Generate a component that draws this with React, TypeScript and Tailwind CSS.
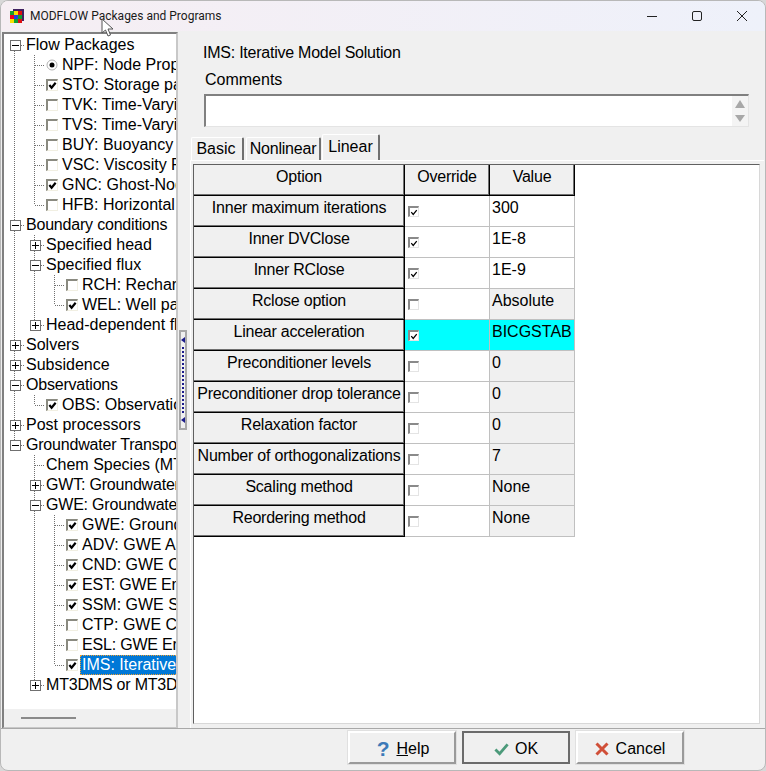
import React from "react";

type Kind = "plus" | "minus" | "check" | "empty" | "radio" | "none";
type Row = { t: string; l: number; k: Kind; sel?: boolean; n?: boolean };

const rows: Row[] = [
  { t: "Flow Packages", l: 0, k: "minus" },
  { t: "NPF: Node Property Flow", l: 1, k: "radio" },
  { t: "STO: Storage package", l: 1, k: "check" },
  { t: "TVK: Time-Varying K", l: 1, k: "empty" },
  { t: "TVS: Time-Varying S", l: 1, k: "empty" },
  { t: "BUY: Buoyancy Package", l: 1, k: "empty" },
  { t: "VSC: Viscosity Package", l: 1, k: "empty" },
  { t: "GNC: Ghost-Node Correction", l: 1, k: "check" },
  { t: "HFB: Horizontal Flow Barrier", l: 1, k: "empty" },
  { t: "Boundary conditions", l: 0, k: "minus", n: true },
  { t: "Specified head", l: 1, k: "plus" },
  { t: "Specified flux", l: 1, k: "minus" },
  { t: "RCH: Recharge package", l: 2, k: "empty" },
  { t: "WEL: Well package", l: 2, k: "check" },
  { t: "Head-dependent flux", l: 1, k: "plus" },
  { t: "Solvers", l: 0, k: "plus" },
  { t: "Subsidence", l: 0, k: "plus" },
  { t: "Observations", l: 0, k: "minus", n: true },
  { t: "OBS: Observations", l: 1, k: "check" },
  { t: "Post processors", l: 0, k: "plus" },
  { t: "Groundwater Transport", l: 0, k: "minus", n: true },
  { t: "Chem Species (MT3D)", l: 1, k: "none" },
  { t: "GWT: Groundwater Transport", l: 1, k: "plus", n: true },
  { t: "GWE: Groundwater Energy", l: 1, k: "minus", n: true },
  { t: "GWE: Groundwater Energy", l: 2, k: "check" },
  { t: "ADV: GWE Advection", l: 2, k: "check" },
  { t: "CND: GWE Conduction", l: 2, k: "check" },
  { t: "EST: GWE Energy Storage", l: 2, k: "check", n: true },
  { t: "SSM: GWE Source and Sink", l: 2, k: "check" },
  { t: "CTP: GWE Constant Temp", l: 2, k: "empty" },
  { t: "ESL: GWE Energy Source", l: 2, k: "empty", n: true },
  { t: "IMS: Iterative Model Solution", l: 2, k: "check", sel: true },
  { t: "MT3DMS or MT3D-USGS", l: 1, k: "plus", n: true },
];

// Tree connector lines, relative to the tree list origin.
const cy = (i: number) => i * 20 + 10;
const gx = [11, 31, 51];
const verticals: [number, number, number][] = [
  [0, 0, 20],
  [1, 1, 8],
  [1, 10, 14],
  [2, 12, 13],
  [1, 18, 18],
  [1, 21, 32],
  [2, 24, 31],
];

function Connectors() {
  return (
    <svg className="absolute left-0 top-0" width="172" height="680" shapeRendering="crispEdges">
      <g stroke="#707070" strokeWidth="1" strokeDasharray="1 1" fill="none">
        {verticals.map(([lv, a, b], i) => (
          <line key={i} x1={gx[lv] - 0.5} x2={gx[lv] - 0.5} y1={a === 0 ? cy(a) : cy(a) - 10} y2={cy(b)} />
        ))}
        {rows.map((r, i) => (
          <line key={i} x1={gx[r.l]} x2={gx[r.l] + 10} y1={cy(i) + 0.5} y2={cy(i) + 0.5} />
        ))}
      </g>
    </svg>
  );
}

function Expander({ open }: { open: boolean }) {
  return (
    <svg width="11" height="11" viewBox="0 0 11 11" className="block" shapeRendering="crispEdges">
      <rect x="0.5" y="0.5" width="10" height="10" fill="#fff" stroke="#707070" />
      <path d={open ? "M2 5.5H9" : "M2 5.5H9M5.5 2V9"} stroke="#000" fill="none" />
    </svg>
  );
}

function Check({ on, size = 12 }: { on: boolean; size?: number }) {
  const big = size === 12;
  return (
    <span
      className={
        big
          ? "flex h-[12px] w-[12px] items-center justify-center border-2 border-b-[#f1efe2] border-l-[#8a8a80] border-r-[#f1efe2] border-t-[#8a8a80] border-b-[1px] border-r-[1px] bg-white"
          : "flex h-[11px] w-[11px] items-center justify-center border-2 border-b-[#e4e4e4] border-l-[#8a8a8a] border-r-[#e4e4e4] border-t-[#8a8a8a] border-b-[1px] border-r-[1px] bg-white"
      }
    >
      {on && (
        <svg width={big ? 10 : 8} height={big ? 9 : 7} viewBox="0 0 10 9">
          <path d="M1.5 4 L4 7 L8.5 1.5" stroke="#000" strokeWidth={big ? 2.4 : 1.6} fill="none" />
        </svg>
      )}
    </span>
  );
}

function Radio() {
  return (
    <svg width="12" height="12" viewBox="0 0 12 12" className="block">
      <circle cx="6" cy="6" r="5" fill="#fff" stroke="#b0b0b0" />
      <circle cx="6" cy="6" r="2.5" fill="#000" />
    </svg>
  );
}

function TreeRow({ r }: { r: Row }) {
  const isExp = r.k === "plus" || r.k === "minus";
  const indent = ["ml-[6px]", "ml-[26px]", "ml-[46px]"];
  const boxIndent = ["", "ml-[42px]", "ml-[62px]"];
  return (
    <div className="relative flex h-5 items-center whitespace-nowrap">
      {isExp && (
        <span className={`${indent[r.l]} mr-[5px] shrink-0`}>
          <Expander open={r.k === "minus"} />
        </span>
      )}
      {(r.k === "check" || r.k === "empty") && (
        <span className={`${boxIndent[r.l]} mr-[4px] shrink-0`}>
          <Check on={r.k === "check"} />
        </span>
      )}
      {r.k === "radio" && (
        <span className={`${boxIndent[r.l]} mr-[4px] shrink-0`}>
          <Radio />
        </span>
      )}
      {r.k === "none" && <span className="ml-[42px] shrink-0" />}
      <span
        className={
          r.sel
            ? "-ml-[2px] flex h-5 flex-1 items-center border border-dotted border-[#f0a030] bg-[#0078d7] pl-[1px] text-white"
            : r.n
              ? "tracking-[-0.2px] text-black"
              : "text-black"
        }
      >
        {r.t}
      </span>
    </div>
  );
}

const gridRows: { o: string; v: string; on: boolean; white?: boolean; cyan?: boolean }[] = [
  { o: "Inner maximum iterations", v: "300", on: true, white: true },
  { o: "Inner DVClose", v: "1E-8", on: true, white: true },
  { o: "Inner RClose", v: "1E-9", on: true, white: true },
  { o: "Rclose option", v: "Absolute", on: false },
  { o: "Linear acceleration", v: "BICGSTAB", on: true, cyan: true },
  { o: "Preconditioner levels", v: "0", on: false },
  { o: "Preconditioner drop tolerance", v: "0", on: false },
  { o: "Relaxation factor", v: "0", on: false },
  { o: "Number of orthogonalizations", v: "7", on: false },
  { o: "Scaling method", v: "None", on: false },
  { o: "Reordering method", v: "None", on: false },
];

const fixedCell =
  "flex h-[31px] justify-center overflow-hidden whitespace-nowrap border-b border-r border-b-black border-r-black bg-[#f0f0f0] pt-[2px] tracking-[-0.22px] shadow-[inset_-1px_-1px_0_#707070]";

function Btn({ children, dark }: { children: React.ReactNode; dark?: boolean }) {
  return (
    <button
      className={
        dark
          ? "flex h-[33px] w-[108px] items-center justify-center gap-[6px] border-2 border-[#6b6b6b] bg-[#f0f0f0] pt-[3px]"
          : "flex h-[33px] w-[108px] items-center justify-center gap-[6px] border-2 border-b-[#9a9a9a] border-l-white border-r-[#9a9a9a] border-t-white bg-[#f0f0f0] pt-[3px] shadow-[0_0_0_1px_#e0e0e0]"
      }
    >
      {children}
    </button>
  );
}

export default function App() {
  return (
    <div
      className="relative h-[771px] w-[766px] overflow-hidden bg-[#d8d8d8] text-[16px] leading-[20px] text-black"
      style={{ fontFamily: '"Liberation Sans", Arial, sans-serif' }}
    >
      <div className="flex h-full flex-col overflow-hidden rounded-[8px] border border-[#b8b8b8] bg-[#f0f0f0]">
        {/* Title bar */}
        <div className="flex h-[30px] shrink-0 items-center bg-gradient-to-r from-[#f6eef3] to-[#eef1fa] pl-[9px]">
          <svg width="15" height="14" viewBox="0 0 15 14" className="shrink-0" shapeRendering="crispEdges">
            <rect x="3" y="0" width="11" height="2" fill="#402060" />
            <rect x="0" y="2" width="4" height="4" fill="#1a9a30" />
            <rect x="4" y="2" width="4" height="4" fill="#f8e000" />
            <rect x="8" y="2" width="4" height="4" fill="#e01010" />
            <rect x="0" y="6" width="4" height="4" fill="#f00020" />
            <rect x="4" y="6" width="4" height="4" fill="#2040e0" />
            <rect x="8" y="6" width="4" height="4" fill="#10a030" />
            <rect x="0" y="10" width="4" height="4" fill="#f8e000" />
            <rect x="4" y="10" width="4" height="4" fill="#10a030" />
            <rect x="8" y="10" width="4" height="4" fill="#e01010" />
            <rect x="12" y="2" width="2" height="10" fill="#402060" />
          </svg>
          <span
            className="ml-[5px] text-[12px] text-[#1a1a1a]"
            style={{ fontFamily: 'Roboto, "Noto Sans", sans-serif' }}
          >
            MODFLOW Packages and Programs
          </span>
          <div className="ml-auto flex items-center pr-[17px]">
            <svg width="12" height="12" viewBox="0 0 12 12" className="mr-[33px]">
              <path d="M1 6.5H11" stroke="#222" strokeWidth="1" fill="none" />
            </svg>
            <svg width="12" height="12" viewBox="0 0 12 12" className="mr-[33px]">
              <rect x="1.5" y="1.5" width="9" height="9" rx="1.5" stroke="#222" strokeWidth="1" fill="none" />
            </svg>
            <svg width="12" height="12" viewBox="0 0 12 12">
              <path d="M1 1L11 11M11 1L1 11" stroke="#222" strokeWidth="1" fill="none" />
            </svg>
          </div>
        </div>

        {/* Body */}
        <div className="flex min-h-0 flex-1">
          {/* Tree */}
          <div className="ml-[1px] mt-[1px] flex h-[697px] w-[176px] shrink-0 flex-col border-2 border-b-[#c8c8c8] border-l-[#808080] border-r-[#c8c8c8] border-t-[#808080] bg-white">
            <div className="relative min-h-0 flex-1 overflow-hidden pt-[1px]">
              <div className="relative w-[172px] overflow-hidden">
                <Connectors />
                {rows.map((r, i) => (
                  <TreeRow key={i} r={r} />
                ))}
              </div>
            </div>
            <div className="flex h-[18px] shrink-0 items-center bg-[#f0f0f0] pl-[17px]">
              <div className="h-[2px] w-[55px] bg-[#8a8a8a]" />
            </div>
          </div>

          {/* Splitter */}
          <div className="flex w-[12px] shrink-0 items-center pl-[1px]">
            <div className="flex h-[100px] w-[8px] flex-col items-center justify-between border-2 border-[#a8a8a8] py-[5px]">
              <span className="h-0 w-0 border-y-[3px] border-r-[4px] border-y-transparent border-r-[#1a1a8a]" />
              <span className="my-[4px] flex-1 border-l-2 border-dotted border-[#1a1a8a]" />
              <span className="h-0 w-0 border-y-[3px] border-r-[4px] border-y-transparent border-r-[#1a1a8a]" />
            </div>
          </div>

          {/* Right panel */}
          <div className="flex min-w-0 flex-1 flex-col">
            <div className="ml-[13px] mt-[12px] tracking-[-0.24px]">IMS: Iterative Model Solution</div>
            <div className="ml-[15px] mt-[7px]">Comments</div>
            <div className="ml-[14px] mt-[4px] flex h-[33px] w-[545px] justify-end border-2 border-b-[#e4e4e4] border-l-[#808080] border-r-[#e4e4e4] border-t-[#808080] border-b-[1px] border-r-[1px] bg-white">
              <div className="flex w-[16px] flex-col items-center gap-[7px] bg-[#f4f4f4] pt-[4px]">
                <span className="h-0 w-0 border-x-[5px] border-b-[8px] border-x-transparent border-b-[#a8a8a8]" />
                <span className="h-0 w-0 border-x-[5px] border-t-[7px] border-x-transparent border-t-[#a8a8a8]" />
              </div>
            </div>

            {/* Tabs */}
            <div className="ml-[1px] mt-[7px] flex h-[26px] items-end">
              <div className="flex h-[23px] w-[53px] items-start justify-center rounded-t-[2px] border-l border-r-2 border-t border-l-white border-r-[#707070] border-t-white pr-[2px] pt-[1px]">
                Basic
              </div>
              <div className="ml-[2px] flex h-[23px] w-[75px] items-start justify-center rounded-t-[2px] border-l border-r-2 border-t border-l-white border-r-[#707070] border-t-white pt-[1px] tracking-[-0.2px]">
                Nonlinear
              </div>
              <div className="ml-[1px] flex h-[26px] w-[58px] items-start justify-center rounded-t-[2px] border-l border-r-2 border-t border-l-white border-r-[#707070] border-t-white pt-[2px]">
                Linear
              </div>
            </div>

            {/* Page */}
            <div className="-mr-[1px] flex h-[568px] w-[574px] flex-col border-l border-t border-white px-[2px] pb-[1px] pt-[3px]">
              <div className="h-[560px] w-[567px] border border-b-[#d8d8d8] border-l-[#606060] border-r-[#d8d8d8] border-t-[#606060] bg-white">
                <div className="grid w-[381px] grid-cols-[211px_85px_85px]">
                  <div className={fixedCell}>Option</div>
                  <div className={fixedCell}>Override</div>
                  <div className={fixedCell}>Value</div>
                  {gridRows.map((r) => (
                    <React.Fragment key={r.o}>
                      <div className={fixedCell}>{r.o}</div>
                      <div
                        className={
                          r.cyan
                            ? "h-[31px] border-b border-r border-[#c0c0c0] bg-[#00ffff] pl-[3px] pt-[10px]"
                            : "h-[31px] border-b border-r border-[#c0c0c0] bg-white pl-[3px] pt-[10px]"
                        }
                      >
                        <Check on={r.on} size={11} />
                      </div>
                      <div
                        className={
                          r.cyan
                            ? "h-[31px] border-b border-r border-[#c0c0c0] bg-[#00ffff] pl-[2px] pt-[2px]"
                            : r.white
                              ? "h-[31px] border-b border-r border-[#c0c0c0] bg-white pl-[2px] pt-[2px]"
                              : "h-[31px] border-b border-r border-[#c0c0c0] bg-[#f0f0f0] pl-[2px] pt-[2px]"
                        }
                      >
                        {r.v}
                      </div>
                    </React.Fragment>
                  ))}
                </div>
              </div>
            </div>
          </div>
        </div>

        {/* Footer */}
        <div className="flex h-[42px] shrink-0 items-start gap-[6px] border-t border-[#a8a8a8] pl-[347px] pt-[2px]">
          <Btn>
            <span className="ml-[2px] mr-[1px] text-[21px] font-bold text-[#3d7ab8]">?</span>
            <span>
              <u>H</u>elp
            </span>
          </Btn>
          <Btn dark>
            <svg width="15" height="14" viewBox="0 0 16 14">
              <path d="M1.5 7.5L6 12L14.5 2" stroke="#4c9a7a" strokeWidth="3" fill="none" />
            </svg>
            <span>OK</span>
          </Btn>
          <Btn>
            <svg width="14" height="14" viewBox="0 0 14 14" className="mr-[1px]">
              <path d="M1.5 1.5L12.5 12.5M12.5 1.5L1.5 12.5" stroke="#d04f38" strokeWidth="3" fill="none" />
            </svg>
            <span>Cancel</span>
          </Btn>
        </div>
      </div>

      {/* Mouse pointer */}
      <svg className="absolute left-[101px] top-[18px]" width="13" height="19" viewBox="0 0 13 19">
        <path d="M1 1V15L4.5 12L7 18L9.5 17L7 11H12Z" fill="#fff" stroke="#555" strokeWidth="1" />
      </svg>
    </div>
  );
}
